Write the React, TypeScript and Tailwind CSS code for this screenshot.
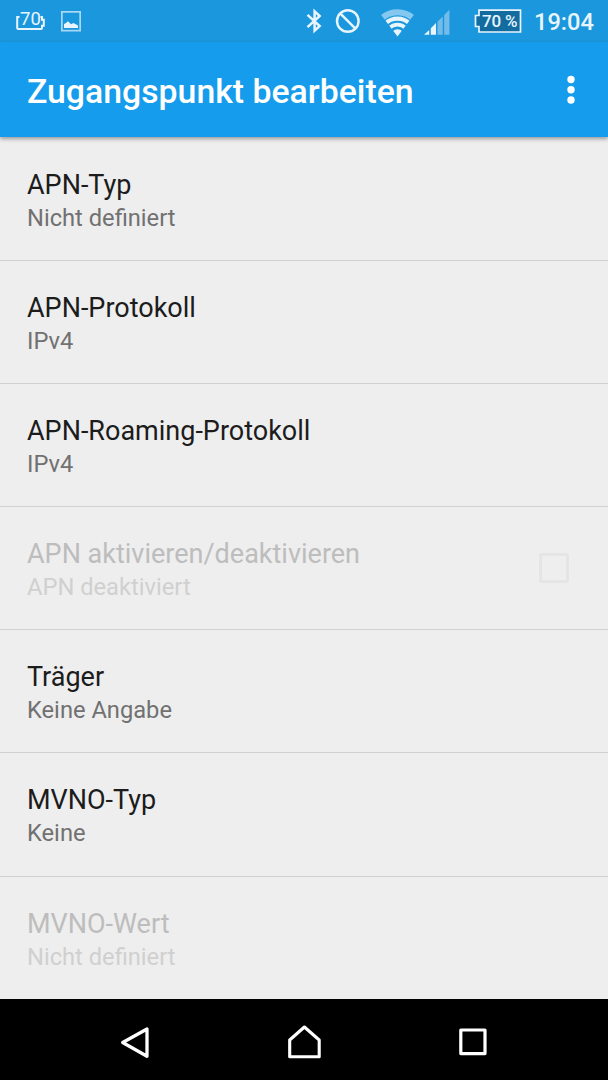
import React from 'react';

type Entry = { title: string; summary: string; disabled?: boolean; checkbox?: boolean };

const entries: Entry[] = [
  { title: 'APN-Typ', summary: 'Nicht definiert' },
  { title: 'APN-Protokoll', summary: 'IPv4' },
  { title: 'APN-Roaming-Protokoll', summary: 'IPv4' },
  { title: 'APN aktivieren/deaktivieren', summary: 'APN deaktiviert', disabled: true, checkbox: true },
  { title: 'Träger', summary: 'Keine Angabe' },
  { title: 'MVNO-Typ', summary: 'Keine' },
  { title: 'MVNO-Wert', summary: 'Nicht definiert', disabled: true },
];

function StatusBar() {
  return (
    <div className="flex h-[42px] shrink-0 items-start bg-[#1b97dd] text-[#e8f5fd]">
      <div className="relative ml-4 mt-[11px] h-5 w-[30px]">
        <svg className="absolute inset-0" width="30" height="20" viewBox="0 0 30 20" fill="none" stroke="currentColor" strokeWidth="2">
          <path d="M3.5 6H1.2V17Q1.2 18 2.2 18H25Q26 18 26 17V14.7H27.8V8.7H26V6H24.5" />
        </svg>
        <span className="absolute left-[4px] top-0 text-[18.5px] leading-[17px]">70</span>
      </div>
      <svg className="ml-[15px] mt-[11px]" width="20" height="21" viewBox="0 0 20 21" fill="none">
        <rect x=".85" y=".85" width="18.3" height="18.8" stroke="#a9d8f4" strokeWidth="1.7" />
        <path d="M3 17V13L5 12L7 10.2L10 13.2L12.5 12L17 14.5V17Z" fill="currentColor" />
      </svg>
      <svg className="ml-[225px] mt-2" width="17" height="26" viewBox="0 0 17 26" fill="none" stroke="currentColor" strokeWidth="2.5">
        <path d="M1.5 6.8L13.7 18L8.6 22.7V3.3L13.7 8L1.5 19.2" />
      </svg>
      <svg className="ml-[12px] mt-[9px]" width="25" height="25" viewBox="0 0 25 25" fill="none" stroke="currentColor" strokeWidth="2.4">
        <circle cx="12.8" cy="12" r="10.8" />
        <path d="M5.2 4.4L20.4 19.6" />
      </svg>
      <svg className="ml-[21px] mt-[9px]" width="34" height="28" viewBox="0 0 34 28" fill="none" stroke="currentColor">
        <clipPath id="wifi-wedge">
          <path d="M16.5 27.5L-.5 5V-2H33.5V5Z" />
        </clipPath>
        <g clipPath="url(#wifi-wedge)">
          <circle cx="16.5" cy="27" r="23.7" stroke="#84c8f0" strokeWidth="6" />
          <circle cx="16.5" cy="27" r="17.4" strokeWidth="4.2" />
          <circle cx="16.5" cy="27" r="11.4" strokeWidth="3.9" />
          <circle cx="16.5" cy="27" r="6.8" fill="currentColor" stroke="none" />
        </g>
      </svg>
      <svg className="ml-[9px] mt-[9px]" width="26" height="27" viewBox="0 0 26 27">
        <path d="M0 25.7L5.2 21V25.7ZM6.8 19.2L12 14V25.7H6.8Z" fill="currentColor" />
        <path d="M13.5 12.7L18.7 7.5V25.7H13.5ZM20.2 6L25.4 .8V25.7H20.2Z" fill="#73bcea" />
      </svg>
      <div className="relative ml-[24px] mt-[9px] h-6 w-[48px]">
        <svg className="absolute inset-0" width="48" height="24" viewBox="0 0 48 24">
          <path d="M5 1.2H46.5V23H5V17.5H1.5V6.5H5Z" fill="#126ca0" stroke="#e8f5fd" strokeWidth="1.7" />
        </svg>
        <span className="absolute left-[8px] top-[3px] whitespace-nowrap text-[17px] font-medium leading-[19px] tracking-[-0.2px]">70 %</span>
      </div>
      <span className="ml-[12px] mt-[7px] whitespace-nowrap text-[23.6px] font-medium leading-[30px]">19:04</span>
    </div>
  );
}

function Row({ entry }: { entry: Entry }) {
  return (
    <div className="flex h-[123.1px] shrink-0 items-center justify-between border-b border-[#d1d1d1] pl-[27px] pr-[39px] last:border-b-0">
      <div className="whitespace-nowrap pt-[4px]">
        <div className={`text-[27px] leading-[34px] ${entry.disabled ? 'text-[#bdbdbd]' : 'text-[#1c1c1c]'}`}>{entry.title}</div>
        <div className={`text-[23.7px] leading-[33px] ${entry.disabled ? 'text-[#d0d0d0]' : 'text-[#717171]'}`}>{entry.summary}</div>
      </div>
      {entry.checkbox && <div className="size-[30px] rounded-[3px] border-[3px] border-[#e5e5e5]" />}
    </div>
  );
}

export default function App() {
  return (
    <div className="flex h-[1080px] w-[608px] flex-col overflow-hidden bg-[#eeeeee] font-['Roboto',sans-serif]">
      <StatusBar />
      <header className="relative flex h-[95px] shrink-0 items-center justify-between bg-[#159cec] pl-[27px] pr-[33px] text-white shadow-[0_2px_4px_rgba(0,0,0,0.35)]">
        <h1 className="whitespace-nowrap pt-1 text-[33.8px] font-medium leading-[40px]">Zugangspunkt bearbeiten</h1>
        <svg width="8" height="30" viewBox="0 0 8 30" fill="currentColor">
          <circle cx="4" cy="4.5" r="3.7" />
          <circle cx="4" cy="14.8" r="3.7" />
          <circle cx="4" cy="25" r="3.7" />
        </svg>
      </header>
      <main className="flex min-h-0 flex-1 flex-col overflow-hidden pt-px">
        {entries.map((entry) => (
          <Row key={entry.title} entry={entry} />
        ))}
      </main>
      <nav className="flex h-[81px] shrink-0 items-start bg-black text-white">
        <svg className="ml-[119px] mt-[26px]" width="32" height="36" viewBox="0 0 32 36" fill="none" stroke="currentColor" strokeWidth="3.3" strokeLinejoin="round">
          <path d="M28 4V31.3L3.7 17.5Z" />
        </svg>
        <svg className="ml-[135px] mt-[25px]" width="36" height="36" viewBox="0 0 36 36" fill="none" stroke="currentColor" strokeWidth="3.1" strokeLinejoin="round">
          <path d="M3.7 32.7V16L18.4 3L33.2 16V32.7Z" />
        </svg>
        <svg className="ml-[136px] mt-[29px]" width="30" height="29" viewBox="0 0 30 29" fill="none" stroke="currentColor" strokeWidth="3.2" strokeLinejoin="round">
          <path d="M2.8 2H27V25.6H2.8Z" />
        </svg>
      </nav>
    </div>
  );
}
